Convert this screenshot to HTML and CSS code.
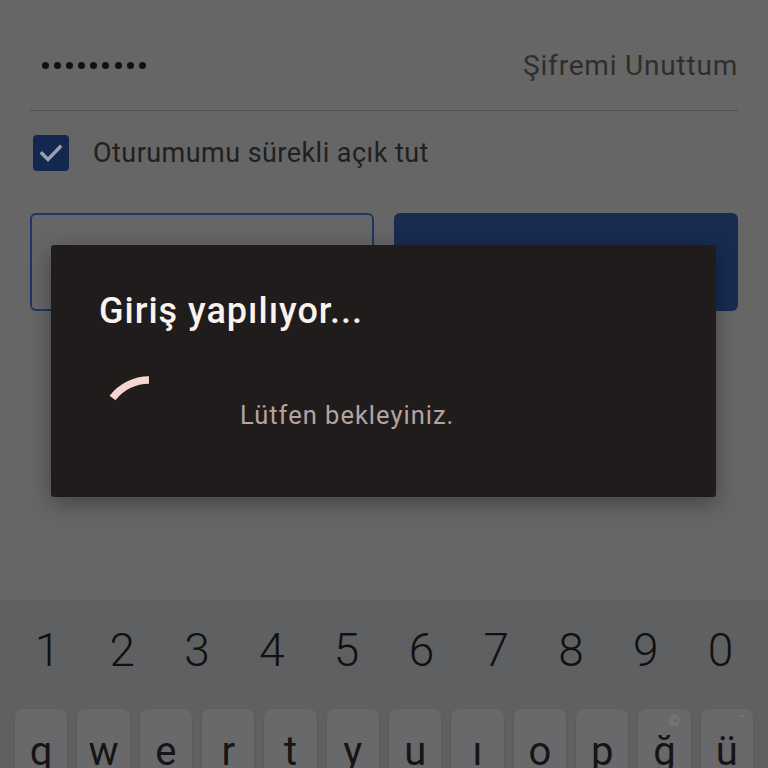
FILE: index.html
```html
<!DOCTYPE html>
<html lang="tr">
<head>
<meta charset="utf-8">
<link rel="stylesheet" href="styles.css">
</head>
<body>
<div class="screen">
  <main class="form">
    <div class="pw-row">
      <div class="dots"><span></span><span></span><span></span><span></span><span></span><span></span><span></span><span></span><span></span></div>
      <div class="forgot">Şifremi Unuttum</div>
    </div>
    <div class="check-row">
      <div class="checkbox">
        <svg width="36" height="36" viewBox="0 0 36 36"><path d="M9 18.5 L15 24.5 L27 12" fill="none" stroke="#9aa0ac" stroke-width="3.4" stroke-linecap="square"/></svg>
      </div>
      <div class="check-label">Oturumumu sürekli açık tut</div>
    </div>
    <div class="buttons">
      <div class="btn btn-outline"></div>
      <div class="btn btn-fill"></div>
    </div>
  </main>
  <section class="keyboard">
    <div class="num-row">
      <span>1</span><span>2</span><span>3</span><span>4</span><span>5</span><span>6</span><span>7</span><span>8</span><span>9</span><span>0</span>
    </div>
    <div class="key-row">
      <div class="key">q</div><div class="key">w</div><div class="key">e</div><div class="key">r</div><div class="key">t</div><div class="key">y</div><div class="key">u</div><div class="key">ı</div><div class="key">o</div><div class="key">p</div><div class="key"><span class="sup sup-c">©</span>ğ</div><div class="key"><span class="sup sup-tm">™</span>ü</div>
    </div>
  </section>
</div>
<div class="dialog">
  <h1 class="dialog-title">Giriş yapılıyor...</h1>
  <div class="dialog-body">
    <svg class="spinner" width="100" height="100" viewBox="0 0 100 100"><path d="M13.5 26 A46 46 0 0 1 50 8" fill="none" stroke="#f7d6d1" stroke-width="7.5"/></svg>
    <p class="dialog-msg">Lütfen bekleyiniz.</p>
  </div>
</div>
</body>
</html>
```

FILE: styles.css
```css
html, body {
  margin: 0;
  padding: 0;
}
body {
  width: 768px;
  height: 768px;
  overflow: hidden;
  background: #666666;
  font-family: Roboto, "Noto Sans", sans-serif;
  position: relative;
}
.screen {
  display: flex;
  flex-direction: column;
  height: 768px;
}
.form {
  height: 600px;
  padding: 0 30px;
  box-sizing: border-box;
}
.pw-row {
  height: 111px;
  box-sizing: border-box;
  padding-top: 20px;
  display: flex;
  align-items: center;
  justify-content: space-between;
  border-bottom: 1.5px solid #4f4f4f;
}
.dots {
  display: flex;
  gap: 5.1px;
  padding-left: 12px;
}
.dots span {
  width: 7px;
  height: 7px;
  border-radius: 50%;
  background: #111;
}
.forgot {
  font-size: 28px;
  letter-spacing: 0.8px;
  color: #2e2e2e;
}
.check-row {
  display: flex;
  align-items: center;
  gap: 24px;
  margin-top: 24px;
  padding-left: 3px;
}
.checkbox {
  width: 36px;
  height: 36px;
  border-radius: 4px;
  background: #14284f;
}
.checkbox svg {
  display: block;
}
.check-label {
  font-size: 27px;
  letter-spacing: 0.45px;
  color: #202020;
}
.buttons {
  display: grid;
  grid-template-columns: 1fr 1fr;
  gap: 20px;
  margin-top: 42px;
}
.btn {
  height: 98px;
  border-radius: 6px;
  box-sizing: border-box;
}
.btn-outline {
  border: 2.5px solid #1d3866;
}
.btn-fill {
  background: #182b50;
}
.keyboard {
  flex: 1;
  background: #5f6062;
  overflow: hidden;
}
.num-row {
  display: grid;
  grid-template-columns: repeat(10, 1fr);
  padding: 0 10px;
  height: 109px;
  box-sizing: border-box;
  padding-top: 22px;
}
.num-row span {
  text-align: center;
  font-size: 46px;
  font-weight: 300;
  line-height: 56px;
  color: #111;
}
.key-row {
  display: grid;
  grid-template-columns: repeat(12, 1fr);
  padding: 0 10px;
}
.key {
  position: relative;
  margin: 0 5px;
  height: 100px;
  border-radius: 8px;
  background: #69696b;
  box-shadow: 0 1px 2px rgba(0,0,0,0.15);
  text-align: center;
  font-size: 40px;
  line-height: 40px;
  padding-top: 23px;
  box-sizing: border-box;
  color: #151515;
}
.sup {
  position: absolute;
  color: #808082;
  line-height: 1;
}
.sup-c {
  font-size: 14px;
  right: 11px;
  top: 5px;
}
.sup-tm {
  font-size: 10px;
  right: 8px;
  top: 5px;
}
.dialog {
  position: absolute;
  left: 51px;
  top: 245px;
  width: 665px;
  height: 252px;
  background: #201c1b;
  border-radius: 3px;
  box-shadow: 0 6px 22px rgba(0,0,0,0.35);
  box-sizing: border-box;
  padding: 44px 48px 0;
}
.dialog-title {
  margin: 0;
  font-size: 36px;
  letter-spacing: 1px;
  font-weight: 500;
  line-height: 44px;
  color: #fbf1ef;
}
.dialog-body {
  display: flex;
  align-items: flex-start;
  margin-top: 39px;
}
.spinner {
  display: block;
  margin-left: 0;
}
.dialog-msg {
  margin: 26px 0 0 41px;
  font-size: 25.5px;
  letter-spacing: 1px;
  line-height: 34px;
  color: #b3a4a3;
}
```
